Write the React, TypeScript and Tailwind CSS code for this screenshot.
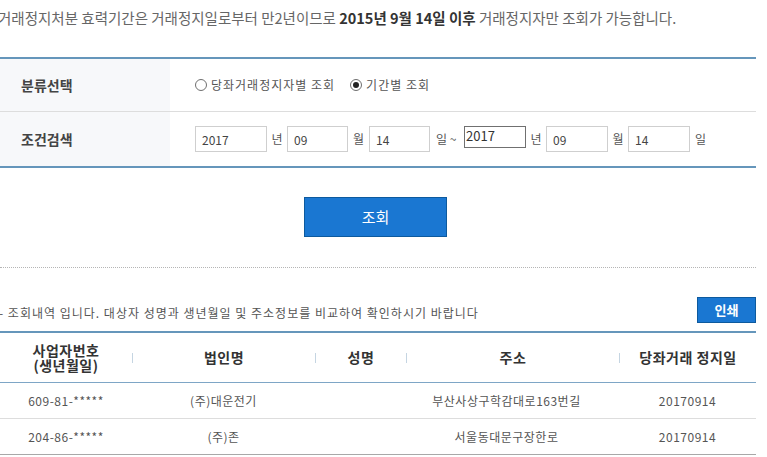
import React from "react";

const font = "font-['Noto_Sans_CJK_KR','Noto_Sans',sans-serif]";

function Radio({ checked, label }: { checked?: boolean; label: string }) {
  return (
    <div className="flex items-center">
      <span className="w-[12px] h-[12px] rounded-full border border-[#6f6f6f] bg-white flex items-center justify-center">
        {checked && <span className="w-[6px] h-[6px] rounded-full bg-[#222]" />}
      </span>
      <span className="ml-[4px]">{label}</span>
    </div>
  );
}

function Box({ value, w }: { value: string; w: string }) {
  return (
    <input
      readOnly
      value={value}
      className={`${w} h-[26px] border border-[#cfcfcf] bg-white pl-[6px] text-[12px] text-[#444] outline-none`}
    />
  );
}

const rows = [
  { no: "609-81-*****", corp: "(주)대운전기", name: "", addr: "부산사상구학감대로163번길", date: "20170914" },
  { no: "204-86-*****", corp: "(주)존", name: "", addr: "서울동대문구장한로", date: "20170914" },
];

export default function App() {
  return (
    <div className={`w-[767px] h-[457px] overflow-hidden bg-white ${font}`}>
      <div className="w-[756px]">
        <p className="h-[57px] pt-[8px] -ml-[2px] whitespace-nowrap text-[14.5px] leading-[20px] text-[#666]">
          거래정지처분 효력기간은 거래정지일로부터 만2년이므로{" "}
          <b className="text-[#333]">2015년 9월 14일 이후</b> 거래정지자만 조회가 가능합니다.
        </p>

        <div className="border-t-2 border-b-2 border-[#6596bb]">
          <div className="flex h-[53px] border-b border-[#dddddd]">
            <div className="w-[170px] bg-[#f7f8fa] flex items-center pl-[21px] text-[14px] font-bold text-[#444]">
              분류선택
            </div>
            <div className="flex items-center pl-[25px] text-[12px] tracking-[1px] text-[#555] gap-[15px]">
              <Radio label="당좌거래정지자별 조회" />
              <Radio checked label="기간별 조회" />
            </div>
          </div>
          <div className="flex h-[54px]">
            <div className="w-[170px] bg-[#f7f8fa] flex items-center pl-[21px] text-[14px] font-bold text-[#444]">
              조건검색
            </div>
            <div className="flex items-center pl-[25px] text-[12px] text-[#555]">
              <Box value="2017" w="w-[72px]" />
              <span className="w-[20px] text-center">년</span>
              <Box value="09" w="w-[61px]" />
              <span className="w-[21px] text-center">월</span>
              <Box value="14" w="w-[61px]" />
              <span className="w-[34px] pl-[6px]">일 ~</span>
              <input
                readOnly
                value="2017"
                className="self-start mt-[14px] w-[62px] h-[22px] border border-[#707070] bg-white pl-[1px] pb-[3px] text-[13px] leading-[14px] text-[#333] outline-none"
              />
              <span className="w-[20px] text-center">년</span>
              <Box value="09" w="w-[62px]" />
              <span className="w-[20px] text-center">월</span>
              <Box value="14" w="w-[62px]" />
              <span className="ml-[5px]">일</span>
            </div>
          </div>
        </div>

        <button className="mt-[29px] ml-[304px] w-[143px] h-[40px] bg-[#1a77d2] border border-[#0d5a9e] text-white text-[15px] flex items-center justify-center">
          조회
        </button>

        <div className="mt-[30px] border-t border-dotted border-[#b5b5b5]" />

        <div className="mt-[29px] flex items-center justify-between h-[26px]">
          <span className="pt-[5px] -ml-[1px] text-[12px] tracking-[1px] text-[#555] whitespace-nowrap">
            - 조회내역 입니다. 대상자 성명과 생년월일 및 주소정보를 비교하여 확인하시기 바랍니다
          </span>
          <button className="w-[59px] h-[26px] bg-[#1a77d2] border border-[#0d5a9e] text-white text-[13px] font-bold flex items-center justify-center">
            인쇄
          </button>
        </div>

        <div className="mt-[8px] border-t-2 border-[#6596bb]">
          <div className="grid grid-cols-[132px_183px_91px_213px_137px] h-[50px] border-b border-[#7ea6c6] text-[14px] tracking-[0.5px] font-bold text-[#333]">
            {["사업자번호\n(생년월일)", "법인명", "성명", "주소", "당좌거래 정지일"].map((h, i) => (
              <div key={i} className="flex items-center">
                {i > 0 && <span className="w-[1px] h-[10px] bg-[#c5d5e2]" />}
                <span className="flex-1 text-center whitespace-pre-line leading-[15px]">{h}</span>
              </div>
            ))}
          </div>
          {rows.map((r, i) => (
            <div
              key={i}
              className={`grid grid-cols-[132px_183px_91px_213px_137px] h-[36px] items-center text-[12px] tracking-[0.5px] text-[#555] text-center border-b ${
                i === rows.length - 1 ? "border-[#a8a8a8]" : "border-[#dddddd]"
              }`}
            >
              <span>{r.no}</span>
              <span>{r.corp}</span>
              <span>{r.name}</span>
              <span className="pr-[12px]">{r.addr}</span>
              <span>{r.date}</span>
            </div>
          ))}
        </div>
      </div>
    </div>
  );
}
